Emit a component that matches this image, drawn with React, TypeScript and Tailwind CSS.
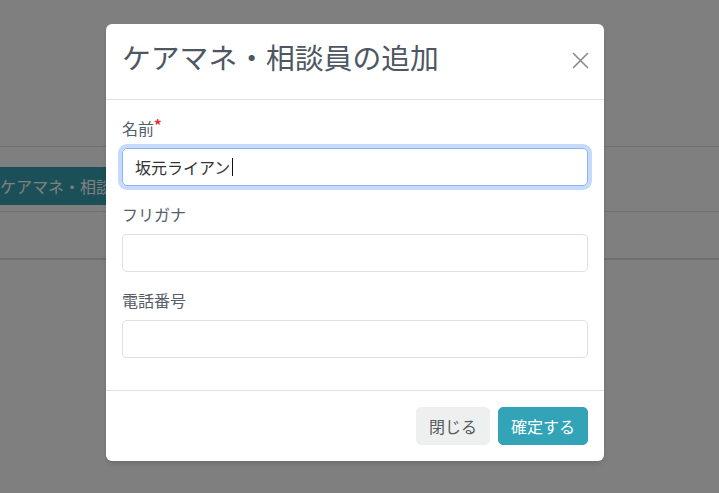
import React from "react";

const FIELDS = [
  { label: "名前", required: true, value: "坂元ライアン", focused: true },
  { label: "フリガナ", required: false, value: "", focused: false },
  { label: "電話番号", required: false, value: "", focused: false },
];

function CloseIcon() {
  return (
    <svg width="17" height="17" viewBox="0 0 17 17" fill="none">
      <path d="M1.5 1.5L15.5 15.5M15.5 1.5L1.5 15.5" stroke="#8a8a8a" strokeWidth="1.6" strokeLinecap="round" />
    </svg>
  );
}

export default function App() {
  return (
    <div className="relative h-[493px] w-full overflow-hidden bg-white font-['Noto_Sans_CJK_JP','Noto_Sans',sans-serif]">
      {/* page behind the modal */}
      <div className="h-[147px] border-b border-[#e0e0e0]" />
      <div className="h-[65px] border-b border-[#e0e0e0] pt-5">
        <div className="flex h-[38px] w-[220px] items-center bg-[#36a0b0] text-base text-white">
          ケアマネ・相談員の追加
        </div>
      </div>
      <div className="h-[48px] border-b-2 border-[#dedede]" />

      {/* backdrop */}
      <div className="absolute inset-0 bg-black/50">
        <div className="ml-[106px] mt-[24px] w-[498px] rounded-md bg-white shadow-md">
          {/* header */}
          <div className="flex items-start justify-between border-b border-[#dee2e6] px-4 pb-[22px] pt-[13px]">
            <h2 className="text-[28.8px] leading-[40px] text-[#4d5763]">ケアマネ・相談員の追加</h2>
            <button className="mr-[-1px] mt-[15px]">
              <CloseIcon />
            </button>
          </div>

          {/* body */}
          <div className="px-4 pb-4 pt-4">
            {FIELDS.map((f) => (
              <div key={f.label} className="mb-4">
                <div className="mb-2 flex items-start text-base leading-6 text-[#545d68]">
                  {f.label}
                  {f.required && (
                    <span className="mt-[2px] text-[15px] font-bold leading-[14px] text-[#ec2a2a]">*</span>
                  )}
                </div>
                <div
                  className={
                    f.focused
                      ? "flex h-[38px] items-center rounded-[5px] border border-[#86b4f5] px-3 text-base text-[#333] shadow-[0_0_0_4px_#c6dbfb]"
                      : "flex h-[38px] items-center rounded-[5px] border border-[#dcdfe3] px-3 text-base text-[#333]"
                  }
                >
                  {f.value}
                  {f.focused && <span className="ml-[2px] inline-block h-[18px] w-px bg-[#111]" />}
                </div>
              </div>
            ))}
          </div>

          {/* footer */}
          <div className="flex justify-end gap-2 border-t border-[#dee2e6] p-4">
            <button className="h-[38px] rounded-[5px] border border-[#eef0f0] bg-[#eef0f0] px-3 text-base text-[#555b61]">
              閉じる
            </button>
            <button className="h-[38px] rounded-[5px] border border-[#33a3b8] bg-[#33a3b8] px-3 text-base text-white">
              確定する
            </button>
          </div>
        </div>
      </div>
    </div>
  );
}
